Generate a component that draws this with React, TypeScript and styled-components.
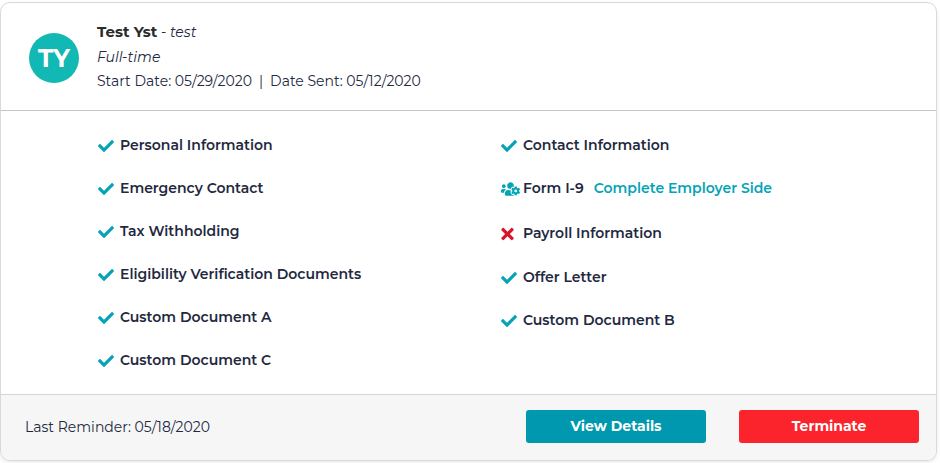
import React from "react";
import styled, { createGlobalStyle, css } from "styled-components";
import { FaCheck, FaTimes, FaUsersCog } from "react-icons/fa";

const GlobalStyle = createGlobalStyle`
  *, *::before, *::after { box-sizing: border-box; }
  body {
    margin: 0;
    background: #ffffff;
    color: #23283e;
    font-family: Montserrat, Inter, sans-serif;
    font-size: 14px;
    line-height: 24px;
  }
`;

const Card = styled.article`
  margin: 2px 3px 2px 0;
  border: 1px solid #d9d9d9;
  border-radius: 10px;
  background: #ffffff;
  box-shadow: 0 2px 4px rgba(0, 0, 0, 0.08);
  overflow: hidden;
`;

const Header = styled.header`
  display: flex;
  align-items: center;
  gap: 18px;
  padding: 17px 28px;
  border-bottom: 1px solid #c4c4c4;
`;

const Avatar = styled.div`
  display: flex;
  align-items: center;
  justify-content: center;
  flex: none;
  width: 50px;
  height: 50px;
  margin-top: 3px;
  border-radius: 50%;
  background: #12b8b3;
  color: #ffffff;
  font-size: 25px;
  font-weight: 700;
`;

const Summary = styled.div`
  min-width: 0;
`;

const Title = styled.div`
  margin-bottom: 1px;
`;

const Name = styled.h2`
  display: inline;
  margin: 0;
  color: #2b2b2b;
  font-size: 15px;
  font-weight: 700;
`;

const Italic = styled.em`
  font-style: italic;
`;

const Dates = styled.div`
  display: flex;
  flex-wrap: wrap;
  gap: 7px;
`;

const Body = styled.section`
  display: grid;
  grid-template-columns: 1fr 1fr;
  padding: 12px 32px 13px 97px;
`;

const List = styled.ul`
  margin: 0;
  padding: 0;
  list-style: none;
`;

type Status = "done" | "employer" | "missing";

const rowHeights: Record<Status, number> = { done: 43, employer: 44, missing: 45 };

const Row = styled.li<{ $status: Status }>`
  display: flex;
  align-items: center;
  height: ${(p) => rowHeights[p.$status]}px;
  font-weight: 600;
`;

const statusIcon = css`
  display: block;
  height: 16px;
`;

const StatusSlot = styled.span`
  flex: none;
  width: 22px;
  padding-top: 2px;
  color: #05a3b6;
`;

const Check = styled(FaCheck)`
  ${statusIcon}
  width: 16px;
`;

const Cross = styled(FaTimes)`
  ${statusIcon}
  width: 13px;
  height: 18px;
  color: #d9152b;
`;

const Team = styled(FaUsersCog)`
  ${statusIcon}
  width: 19px;
`;

const ActionLink = styled.a`
  margin-left: 10px;
  color: #05a3b6;
  text-decoration: none;
`;

const Footer = styled.footer`
  display: flex;
  align-items: center;
  justify-content: space-between;
  padding: 15px 17px 17px 24px;
  border-top: 1px solid #d4d4d4;
  background: #f6f6f6;
`;

const Actions = styled.div`
  display: flex;
  gap: 33px;
`;

const Button = styled.button<{ $danger?: boolean }>`
  width: 180px;
  height: 33px;
  padding: 0 0 1px;
  border: 0;
  border-radius: 3px;
  background: ${(p) => (p.$danger ? "#fb232c" : "#0098ae")};
  color: #ffffff;
  font: inherit;
  font-weight: 700;
  cursor: pointer;
`;

type Item = { label: string; status: Status; action?: string };

const icons = { done: Check, employer: Team, missing: Cross };

const leftItems: Item[] = [
  { label: "Personal Information", status: "done" },
  { label: "Emergency Contact", status: "done" },
  { label: "Tax Withholding", status: "done" },
  { label: "Eligibility Verification Documents", status: "done" },
  { label: "Custom Document A", status: "done" },
  { label: "Custom Document C", status: "done" },
];

const rightItems: Item[] = [
  { label: "Contact Information", status: "done" },
  { label: "Form I-9", status: "employer", action: "Complete Employer Side" },
  { label: "Payroll Information", status: "missing" },
  { label: "Offer Letter", status: "done" },
  { label: "Custom Document B", status: "done" },
];

function Checklist({ items }: { items: Item[] }) {
  return (
    <List>
      {items.map((item) => {
        const Icon = icons[item.status];
        return (
          <Row key={item.label} $status={item.status}>
            <StatusSlot>
              <Icon aria-label={item.status} />
            </StatusSlot>
            <span>{item.label}</span>
            {item.action && <ActionLink href="#employer">{item.action}</ActionLink>}
          </Row>
        );
      })}
    </List>
  );
}

export default function App() {
  return (
    <>
      <GlobalStyle />
      <Card>
        <Header>
          <Avatar>TY</Avatar>
          <Summary>
            <Title>
              <Name>Test Yst</Name> - <Italic>test</Italic>
            </Title>
            <div>
              <Italic>Full-time</Italic>
            </div>
            <Dates>
              <span>Start Date: 05/29/2020</span>
              <span>|</span>
              <span>Date Sent: 05/12/2020</span>
            </Dates>
          </Summary>
        </Header>
        <Body>
          <Checklist items={leftItems} />
          <Checklist items={rightItems} />
        </Body>
        <Footer>
          <span>Last Reminder: 05/18/2020</span>
          <Actions>
            <Button type="button">View Details</Button>
            <Button type="button" $danger>
              Terminate
            </Button>
          </Actions>
        </Footer>
      </Card>
    </>
  );
}
